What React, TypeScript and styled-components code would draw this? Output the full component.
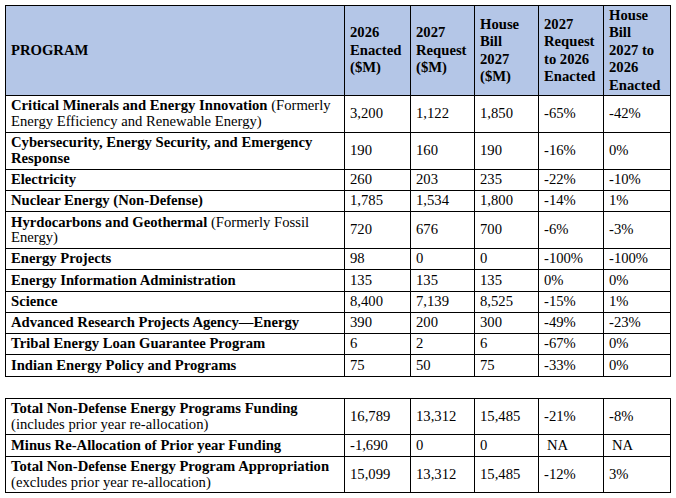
import React from "react";
import styled, { createGlobalStyle } from "styled-components";

const SERIF = `"Liberation Serif", Tinos, "Times New Roman", Times, serif`;

const Global = createGlobalStyle`
  html, body { margin: 0; padding: 0; background: #fff; }
  body { font-family: ${SERIF}; color: #000; }
`;

const Page = styled.div`
  padding: 5px 5px 0 5px;
  display: flex;
  flex-direction: column;
  gap: 21px;
`;

const Table = styled.table`
  border-collapse: collapse;
  table-layout: fixed;
  width: 666px;
  font-family: ${SERIF};
  font-size: 14.67px;
  color: #000;
`;

const HeadCell = styled.th`
  font-family: ${SERIF};
  font-size: 14.67px;
  background: #b4c6e7;
  border: 1px solid #000;
  text-align: left;
  vertical-align: middle;
  font-weight: bold;
  line-height: 17.4px;
  padding: 1px 5px;
`;

const Cell = styled.td`
  font-family: ${SERIF};
  font-size: 14.67px;
  border: 1px solid #000;
  text-align: left;
  vertical-align: middle;
  line-height: 15.5px;
  padding: 2.4px 5px;
`;

const Bold = styled.b`
  font-weight: bold;
`;

const widths = [339, 66, 64, 64, 65, 67];

type Row = { name: React.ReactNode; v: string[] };

const rows: Row[] = [
  { name: <><Bold>Critical Minerals and Energy Innovation</Bold> (Formerly Energy Efficiency and Renewable Energy)</>, v: ["3,200", "1,122", "1,850", "-65%", "-42%"] },
  { name: <Bold>Cybersecurity, Energy Security, and Emergency Response</Bold>, v: ["190", "160", "190", "-16%", "0%"] },
  { name: <Bold>Electricity</Bold>, v: ["260", "203", "235", "-22%", "-10%"] },
  { name: <Bold>Nuclear Energy (Non-Defense)</Bold>, v: ["1,785", "1,534", "1,800", "-14%", "1%"] },
  { name: <><Bold>Hyrdocarbons and Geothermal</Bold> (Formerly Fossil Energy)</>, v: ["720", "676", "700", "-6%", "-3%"] },
  { name: <Bold>Energy Projects</Bold>, v: ["98", "0", "0", "-100%", "-100%"] },
  { name: <Bold>Energy Information Administration</Bold>, v: ["135", "135", "135", "0%", "0%"] },
  { name: <Bold>Science</Bold>, v: ["8,400", "7,139", "8,525", "-15%", "1%"] },
  { name: <Bold>Advanced Research Projects Agency—Energy</Bold>, v: ["390", "200", "300", "-49%", "-23%"] },
  { name: <Bold>Tribal Energy Loan Guarantee Program</Bold>, v: ["6", "2", "6", "-67%", "0%"] },
  { name: <Bold>Indian Energy Policy and Programs</Bold>, v: ["75", "50", "75", "-33%", "0%"] },
];

const totals: Row[] = [
  { name: <><Bold>Total Non-Defense Energy Programs Funding</Bold><br />(includes prior year re-allocation)</>, v: ["16,789", "13,312", "15,485", "-21%", "-8%"] },
  { name: <Bold>Minus Re-Allocation of Prior year Funding</Bold>, v: ["-1,690", "0", "0", "NA", "NA"] },
  { name: <><Bold>Total Non-Defense Energy Program Appropriation</Bold><br />(excludes prior year re-allocation)</>, v: ["15,099", "13,312", "15,485", "-12%", "3%"] },
];

const NumCell = styled(Cell)<{ $center?: boolean }>`
  padding-left: ${(p) => (p.$center ? "8px" : "5px")};
`;

const Cols = () => (
  <colgroup>
    {widths.map((w, i) => (
      <col key={i} style={{ width: w }} />
    ))}
  </colgroup>
);

const Body = ({ data }: { data: Row[] }) => (
  <tbody>
    {data.map((r, i) => (
      <tr key={i}>
        <Cell>{r.name}</Cell>
        {r.v.map((x, j) => (
          <NumCell key={j} $center={x === "NA"}>{x}</NumCell>
        ))}
      </tr>
    ))}
  </tbody>
);

export default function App() {
  return (
    <>
      <Global />
      <Page>
        <Table>
          <Cols />
          <thead>
            <tr>
              <HeadCell>PROGRAM</HeadCell>
              <HeadCell>2026<br />Enacted<br />($M)</HeadCell>
              <HeadCell>2027<br />Request<br />($M)</HeadCell>
              <HeadCell>House<br />Bill<br />2027<br />($M)</HeadCell>
              <HeadCell>2027<br />Request<br />to 2026<br />Enacted</HeadCell>
              <HeadCell>House<br />Bill<br />2027 to<br />2026<br />Enacted</HeadCell>
            </tr>
          </thead>
          <Body data={rows} />
        </Table>
        <Table>
          <Cols />
          <Body data={totals} />
        </Table>
      </Page>
    </>
  );
}
